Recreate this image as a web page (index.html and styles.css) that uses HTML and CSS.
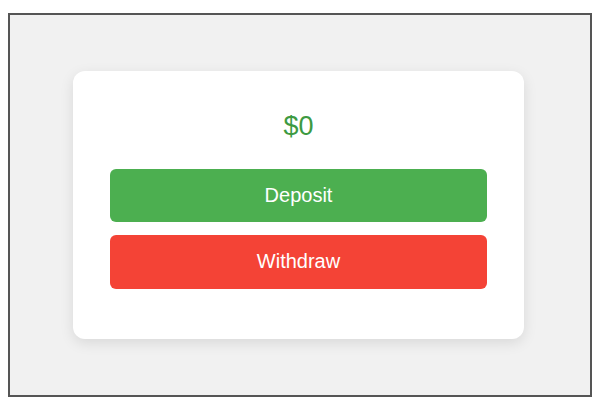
FILE: index.html
```html
<!DOCTYPE html>
<html>
<head>
<meta charset="utf-8">
<link rel="stylesheet" href="styles.css">
</head>
<body>
<div class="frame">
  <div class="card">
    <div class="balance">$0</div>
    <button class="btn deposit">Deposit</button>
    <button class="btn withdraw">Withdraw</button>
  </div>
</div>
</body>
</html>
```
FILE: styles.css
```css
html, body {
  margin: 0;
  padding: 0;
  background: #ffffff;
  font-family: "Liberation Sans", Arial, sans-serif;
}
.frame {
  box-sizing: border-box;
  margin: 13px 0 0 8px;
  width: 584px;
  height: 384px;
  border: 2px solid #555555;
  background: #f1f1f1;
  padding: 0 3px 1px 0;
  display: flex;
  align-items: center;
  justify-content: center;
}
.card {
  box-sizing: border-box;
  width: 451px;
  height: 268px;
  background: #ffffff;
  border-radius: 12px;
  box-shadow: 0 4px 14px rgba(0, 0, 0, 0.10);
  padding: 40px 37px 0;
  display: flex;
  flex-direction: column;
}
.balance {
  font-size: 27px;
  line-height: 31px;
  color: #3d9a41;
  text-align: center;
  margin-bottom: 27px;
}
.btn {
  border: none;
  border-radius: 6px;
  color: #ffffff;
  font-family: "Liberation Sans", Arial, sans-serif;
  font-size: 20px;
  height: 53px;
  padding: 0;
  cursor: pointer;
}
.deposit {
  background: #4caf50;
  margin-bottom: 13px;
}
.withdraw {
  background: #f44336;
  height: 54px;
}
```
